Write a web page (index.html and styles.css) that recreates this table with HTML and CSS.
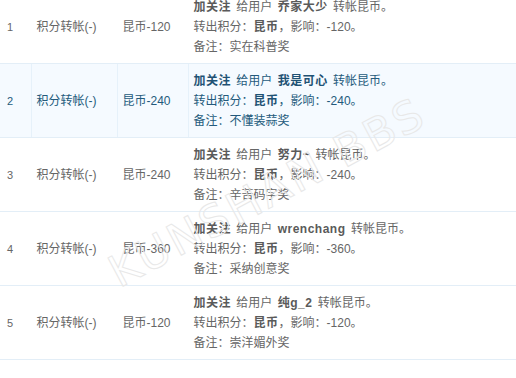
FILE: index.html
```html
<!DOCTYPE html>
<html lang="zh-CN">
<head>
<meta charset="utf-8">
<link rel="stylesheet" href="styles.css">
</head>
<body>
<div class="wrap">
<table class="log">
  <colgroup><col class="c-no"><col class="c-type"><col class="c-amt"><col></colgroup>
  <tbody>
    <tr>
      <td class="no">1</td><td>积分转帐(-)</td><td>昆币-120</td>
      <td><b>加关注</b> 给用户 <b>乔家大少</b> 转帐昆币。<br>转出积分：<b>昆币</b>，影响：-120。<br>备注：实在科普奖</td>
    </tr>
    <tr class="hl">
      <td class="no">2</td><td>积分转帐(-)</td><td>昆币-240</td>
      <td><b>加关注</b> 给用户 <b>我是可心</b> 转帐昆币。<br>转出积分：<b>昆币</b>，影响：-240。<br>备注：不懂装蒜奖</td>
    </tr>
    <tr>
      <td class="no">3</td><td>积分转帐(-)</td><td>昆币-240</td>
      <td><b>加关注</b> 给用户 <b>努力~</b> 转帐昆币。<br>转出积分：<b>昆币</b>，影响：-240。<br>备注：辛苦码字奖</td>
    </tr>
    <tr>
      <td class="no">4</td><td>积分转帐(-)</td><td>昆币-360</td>
      <td><b>加关注</b> 给用户 <b>wrenchang</b> 转帐昆币。<br>转出积分：<b>昆币</b>，影响：-360。<br>备注：采纳创意奖</td>
    </tr>
    <tr>
      <td class="no">5</td><td>积分转帐(-)</td><td>昆币-120</td>
      <td><b>加关注</b> 给用户 <b>纯g_2</b> 转帐昆币。<br>转出积分：<b>昆币</b>，影响：-120。<br>备注：崇洋媚外奖</td>
    </tr>
  </tbody>
</table>
<div class="watermark">KUNSHAN BBS</div>
</div>
</body>
</html>
```

FILE: styles.css
```css
html, body {
  margin: 0;
  padding: 0;
  background: #fff;
}
body {
  font-family: "Liberation Sans", "Noto Sans CJK SC", sans-serif;
  font-size: 12px;
  color: #666;
  overflow: hidden;
  text-spacing-trim: space-all;
}
.wrap {
  position: relative;
  margin-top: -10px;
}
.log {
  width: 100%;
  table-layout: fixed;
  border-collapse: collapse;
}
.c-no { width: 31px; }
.c-type { width: 86px; }
.c-amt { width: 71px; }
.log td {
  padding: 7px 5px 6px 5px;
  line-height: 20px;
  vertical-align: middle;
  border-bottom: 1px solid #e3eef7;
  border-left: 1px solid #fff;
  white-space: nowrap;
  word-spacing: 2px;
}
.log td:first-child { border-left: 0; }
.log td.no {
  font-size: 11px;
  padding-left: 7px;
}
.log b {
  font-weight: bold;
  color: #5a5a5a;
  letter-spacing: 0.5px;
}
.log tr.hl td {
  background: #f5faff;
  color: #245a7c;
  border-left-color: #e6f1fa;
}
.log tr.hl td:first-child { border-left: 0; }
.log tr.hl b { color: #1f5274; }
.watermark {
  position: absolute;
  left: 100px;
  top: 262px;
  font-family: "DejaVu Sans", sans-serif;
  font-size: 44px;
  letter-spacing: 3px;
  color: transparent;
  -webkit-text-stroke: 1px #e8e8e8;
  transform: rotate(-28deg);
  transform-origin: left top;
  pointer-events: none;
  white-space: nowrap;
}
```
